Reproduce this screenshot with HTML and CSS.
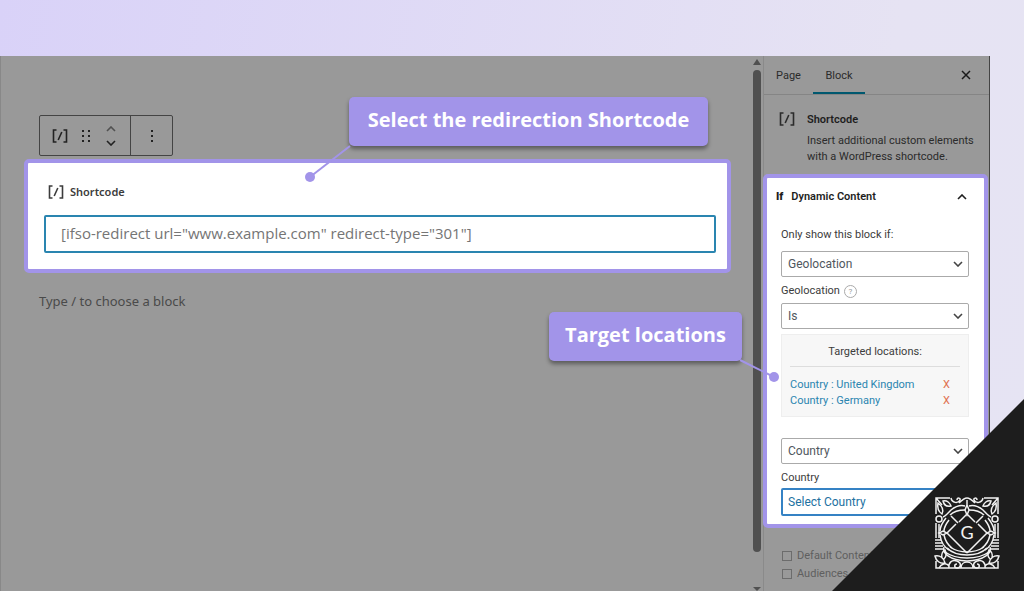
FILE: index.html
```html
<!DOCTYPE html>
<html lang="en">
<head>
    <meta charset="UTF-8">
    <meta name="viewport" content="width=device-width, initial-scale=1.0">
    <title>Redirection Shortcode</title>
    <link rel="stylesheet" href="styles.css">
</head>
<body>
    <!-- Shared icons -->
    <svg width="0" height="0" class="sprite" aria-hidden="true">
        <symbol id="icon-shortcode" viewBox="0 0 16 14">
            <path d="M4.500 1H1.500V13H4.500M11.500 1H14.500V13H11.500M9.800 3L6.200 11" fill="none" stroke="currentColor" stroke-width="1.600"/>
        </symbol>
        <symbol id="icon-chevron" viewBox="0 0 10 6">
            <path d="M1 1L5 5L9 1" fill="none" stroke="currentColor" stroke-width="1.600"/>
        </symbol>
    </svg>

    <div class="workspace">
        <main class="editor">
            <div class="toolbar">
                <div class="toolbar-group">
                    <button type="button" aria-label="Shortcode"><svg class="icon-code"><use href="#icon-shortcode"/></svg></button>
                    <button type="button" aria-label="Drag">
                        <svg width="10" height="14" viewBox="0 0 10 14" fill="currentColor">
                            <rect x="1" y="1" width="2" height="2"/><rect x="7" y="1" width="2" height="2"/>
                            <rect x="1" y="6" width="2" height="2"/><rect x="7" y="6" width="2" height="2"/>
                            <rect x="1" y="11" width="2" height="2"/><rect x="7" y="11" width="2" height="2"/>
                        </svg>
                    </button>
                    <div class="movers">
                        <button type="button" class="mover-up" aria-label="Move up"><svg class="icon-chevron"><use href="#icon-chevron"/></svg></button>
                        <button type="button" aria-label="Move down"><svg class="icon-chevron"><use href="#icon-chevron"/></svg></button>
                    </div>
                </div>
                <div class="toolbar-group toolbar-more">
                    <button type="button" aria-label="Options">
                        <svg width="4" height="14" viewBox="0 0 4 14" fill="currentColor">
                            <rect x="1" y="1" width="2" height="2"/><rect x="1" y="6" width="2" height="2"/><rect x="1" y="11" width="2" height="2"/>
                        </svg>
                    </button>
                </div>
            </div>

            <section class="shortcode-card">
                <label for="shortcode" class="shortcode-label">
                    <svg class="icon-code"><use href="#icon-shortcode"/></svg>
                    Shortcode
                </label>
                <input id="shortcode" class="shortcode-input" type="text" value='[ifso-redirect url="www.example.com" redirect-type="301"]'>

                <div class="callout callout-shortcode">
                    Select the redirection Shortcode
                    <svg class="pin" width="48" height="42" viewBox="0 0 48 42">
                        <path d="M6 35L46 4" stroke="#a294e9" stroke-width="2"/>
                        <circle cx="6" cy="35" r="5" fill="#a294e9"/>
                    </svg>
                </div>
            </section>

            <p class="prompt">Type / to choose a block</p>
        </main>

        <div class="scrollbar">
            <span class="arrow-up"></span>
            <span class="thumb"></span>
            <span class="arrow-down"></span>
        </div>

        <aside class="sidebar">
            <nav class="tabs">
                <button type="button" class="tab">Page</button>
                <button type="button" class="tab active">Block</button>
                <button type="button" class="close" aria-label="Close">
                    <svg width="10" height="10" viewBox="0 0 10 10"><path d="M1 1L9 9M9 1L1 9" stroke="currentColor" stroke-width="1.500"/></svg>
                </button>
            </nav>

            <div class="block-info">
                <svg class="icon-code"><use href="#icon-shortcode"/></svg>
                <div>
                    <h2>Shortcode</h2>
                    <p>Insert additional custom elements with a WordPress shortcode.</p>
                </div>
            </div>

            <section class="panel">
                <button type="button" class="panel-title">
                    <span class="brand">If</span>
                    Dynamic Content
                    <svg class="icon-chevron up"><use href="#icon-chevron"/></svg>
                </button>

                <label for="condition">Only show this block if:</label>
                <div class="select">
                    <select id="condition"><option>Geolocation</option></select>
                    <svg class="icon-chevron"><use href="#icon-chevron"/></svg>
                </div>

                <div class="label-row">
                    <label for="operator">Geolocation</label>
                    <span class="help">?</span>
                </div>
                <div class="select">
                    <select id="operator"><option>Is</option></select>
                    <svg class="icon-chevron"><use href="#icon-chevron"/></svg>
                </div>

                <div class="targets">
                    <h3>Targeted locations:</h3>
                    <ul>
                        <li><a href="#">Country : United Kingdom</a><button type="button">X</button></li>
                        <li><a href="#">Country : Germany</a><button type="button">X</button></li>
                    </ul>
                </div>

                <div class="select">
                    <select id="type" aria-label="Location type"><option>Country</option></select>
                    <svg class="icon-chevron"><use href="#icon-chevron"/></svg>
                </div>
                <label for="country" class="country-label">Country</label>
                <div class="select select-focus">
                    <select id="country"><option>Select Country</option></select>
                </div>

                <div class="callout callout-target">
                    Target locations
                    <svg class="pin" width="42" height="24" viewBox="0 0 42 24">
                        <path d="M2 1L36 18" stroke="#a294e9" stroke-width="2"/>
                        <circle cx="36" cy="18" r="5" fill="#a294e9"/>
                    </svg>
                </div>
            </section>

            <div class="extras">
                <label><input type="checkbox"> Default Content</label>
                <label><input type="checkbox"> Audiences</label>
            </div>
        </aside>
    </div>

    <!-- Corner badge -->
    <div class="corner">
        <svg class="logo" viewBox="0 0 66 72" fill="none" stroke="#f2f2f2" stroke-width="1.500">
            <defs>
                <g id="ornament">
                    <!-- frame and corner leaves -->
                    <path d="M2 17V1H16M2 1L8 8M2 26V41M5 27V41M1 43H7M1 46H8M1 49H9M1 52H10"/>
                    <path d="M4 6C3 11 5 15 8 17C10 13 8 9 4 6ZM9 4C13 3 16 6 17 9C13 10 10 8 9 4Z"/>
                    <circle cx="5" cy="22" r="3"/>
                    <path d="M17 1C18 6 24 7 26 3C27 1 23 0 23 3M25 6C28 3 30 1 33 1"/>
                    <path d="M9 20C12 19 14 16 17 13C22 9 27 8 31 9"/>
                    <!-- ring bands -->
                    <path d="M31 13C24 13 19 15 16 18M12 21C8 26 6 30 6 34M15 23C12 27 10 31 10 34M6 38C7 45 10 50 15 53M10 38C11 43 14 48 18 51"/>
                    <path d="M11 55C18 60 25 61 33 61M13 51C19 57 26 58 33 58M16 50C22 54 27 55 33 55M10 50C8 56 15 63 33 64"/>
                    <!-- diamond -->
                    <path d="M33 17L25 25M22 27L13 36L33 56M17 19L24 26"/>
                    <path d="M5 36L9 34L13 36L9 38Z"/>
                    <!-- lower scrolls -->
                    <path d="M1 59C6 58 10 61 11 66C6 67 2 64 1 59ZM8 61C7 57 9 54 11 53C13 57 12 60 10 62M2 64V71H33"/>
                    <path d="M5 71C7 67 12 65 15 69M15 71C14 66 18 62 23 64C28 66 27 71 23 71C20 71 20 67 23 67M27 71C27 67 30 65 33 65"/>
                </g>
            </defs>
            <use href="#ornament"/>
            <use href="#ornament" transform="matrix(-1 0 0 1 66 0)"/>
            <path d="M33 8L35 13L33 18L31 13ZM33 3V8"/>
            <text x="33" y="42" text-anchor="middle" fill="#f2f2f2" stroke="none">G</text>
        </svg>
    </div>
</body>
</html>
```
FILE: styles.css
```css
:root {
    --accent: #a294e9;
    --dim: #999;
    --text: #3c3c3c;
    --blue: #2a85b0;
}

* {
    margin: 0;
    padding: 0;
    box-sizing: border-box;
}

body {
    min-height: 100vh;
    padding: 56px 34px 0 0;
    background: linear-gradient(100deg, #d9d2f8, #e6e3f3 80%, #e6e4f3);
    color: var(--text);
    font-family: "Noto Sans", "Open Sans", sans-serif;
    font-size: 11px;
    line-height: 16px;
}

button {
    border: 0;
    background: none;
    color: inherit;
    font: inherit;
    cursor: pointer;
}

svg {
    display: block;
    flex: none;
}

.sprite {
    position: absolute;
}

.icon-code {
    width: 16px;
    height: 14px;
}

.icon-chevron {
    width: 10px;
    height: 6px;
}

.workspace {
    display: flex;
    min-height: calc(100vh - 56px);
    background: var(--dim);
}

/* Editor */
.editor {
    flex: 1;
    padding: 59px 21px 0 24px;
    border-left: 1px solid #888;
    margin-right: -1px;
}

.toolbar {
    display: flex;
    width: 134px;
    height: 41px;
    margin-left: 14px;
    border: 1px solid #444;
    border-radius: 2px;
    color: #222;
}

.toolbar-group {
    display: flex;
    flex: 1;
    align-items: center;
    gap: 13px;
    padding-left: 12px;
}

.toolbar-more {
    flex: none;
    width: 42px;
    justify-content: center;
    padding: 0;
    border-left: 1px solid #444;
}

.movers {
    display: flex;
    flex-direction: column;
    gap: 8px;
    margin-left: 2px;
}

.mover-up {
    opacity: 0.6;
}

.mover-up svg,
.up {
    transform: rotate(180deg);
}

.shortcode-card {
    position: relative;
    margin: 3px 0 20px -1px;
    padding: 21px 11px 16px 16px;
    border: 4px solid var(--accent);
    border-radius: 5px;
    background: white;
}

.shortcode-label {
    display: flex;
    align-items: center;
    gap: 6px;
    margin: 0 0 15px 4px;
    font-weight: 600;
}

.shortcode-input {
    display: block;
    width: 100%;
    height: 38px;
    padding: 0 15px 2px;
    border: 2px solid var(--blue);
    border-radius: 2px;
    color: #757575;
    font: 15px "Open Sans", sans-serif;
    outline: none;
}

.prompt {
    margin-left: 14px;
    color: #4a4a4a;
    font-size: 13px;
}

/* Callouts */
.callout {
    position: absolute;
    z-index: 2;
    height: 49px;
    border-radius: 5px;
    background: var(--accent);
    box-shadow: 0 3px 4px rgba(0, 0, 0, 0.4);
    color: white;
    font: bold 20px/46px "Open Sans", sans-serif;
    text-align: center;
    white-space: nowrap;
}

.callout-shortcode {
    top: -66px;
    right: 19px;
    width: 359px;
}

.callout-target {
    top: 134px;
    right: 242px;
    width: 193px;
}

.pin {
    position: absolute;
}

.callout-shortcode .pin {
    top: 45px;
    right: 356px;
}

.callout-target .pin {
    top: 47px;
    left: 189px;
}

/* Scrollbar */
.scrollbar {
    display: flex;
    flex-direction: column;
    align-items: center;
    gap: 5px;
    width: 12px;
    padding: 3px 0 0;
}

.thumb {
    width: 8px;
    height: 482px;
    border-radius: 4px;
    background: #505050;
}

.arrow-up,
.arrow-down {
    border: 4px solid transparent;
    border-top-width: 0;
    border-bottom: 6px solid #505050;
}

.arrow-down {
    margin-top: auto;
    border-top: 4px solid #505050;
    border-bottom: 0;
}

/* Sidebar */
.sidebar {
    width: 227px;
    border-left: 1px solid #8a8a8a;
    border-right: 1px solid #444;
    font-family: Roboto, "Open Sans", sans-serif;
}

.tabs {
    display: flex;
    height: 39px;
    border-bottom: 1px solid #858585;
}

.tab {
    width: 49px;
    padding-top: 2px;
    color: #2b2b2b;
}

.tab.active {
    width: 52px;
    border-bottom: 2px solid #00586f;
    padding-top: 4px;
}

.close {
    margin-left: auto;
    padding: 0 18px;
    color: #1b1b1b;
}

.block-info {
    display: flex;
    gap: 12px;
    padding: 17px 12px 9px 15px;
    color: #2b2b2b;
}

.block-info h2 {
    margin-bottom: 5px;
    color: #1e1e1e;
    font-size: 11px;
    font-weight: 600;
}

.panel {
    position: relative;
    margin: 0 1px 0 -1px;
    padding: 0 15px 8px 14px;
    border: 4px solid var(--accent);
    border-radius: 5px;
    background: white;
}

.panel-title {
    display: flex;
    align-items: center;
    gap: 8px;
    width: 100%;
    height: 38px;
    margin-bottom: 11px;
    margin-left: -5px;
    color: #1e1e1e;
    font-weight: 600;
}

.panel-title svg {
    margin-left: auto;
    margin-right: -3px;
}

.brand {
    font-weight: 900;
}

.panel > label {
    display: block;
    margin-bottom: 8px;
}

.select {
    position: relative;
}

.select select {
    display: block;
    width: 100%;
    height: 26px;
    padding: 0 6px;
    appearance: none;
    border: 1px solid #aaa;
    border-radius: 2px;
    background: white;
    color: #50575e;
    font: 12px Roboto, "Open Sans", sans-serif;
}

.select svg {
    position: absolute;
    top: 10px;
    right: 6px;
    color: #444;
    pointer-events: none;
}

.select-focus select {
    height: 28px;
    border: 2px solid #3582c4;
    padding: 0 5px;
    color: #2271a1;
}

.label-row {
    display: flex;
    align-items: center;
    gap: 4px;
    margin: 6px 0 4px;
}

.help {
    width: 13px;
    height: 13px;
    border: 1px solid #aaa;
    border-radius: 50%;
    color: #999;
    font-size: 8px;
    line-height: 11px;
    text-align: center;
}

.targets {
    height: 83px;
    margin: 5px 0 21px;
    padding: 9px 8px 0;
    border: 1px solid #eee;
    background: #f7f7f7;
}

.targets h3 {
    margin-bottom: 10px;
    padding-bottom: 6px;
    border-bottom: 1px solid #ddd;
    font-size: 11px;
    font-weight: 400;
    text-align: center;
}

.targets ul {
    list-style: none;
}

.targets li {
    display: flex;
    justify-content: space-between;
    padding-right: 10px;
}

.targets a {
    color: var(--blue);
    text-decoration: none;
}

.targets button {
    color: #e0704f;
}

.panel > .country-label {
    margin: 6px 0 2px;
}

.extras {
    display: flex;
    flex-direction: column;
    gap: 2px;
    padding: 20px 18px 8px;
    color: #5f5f5f;
}

.extras label {
    display: flex;
    align-items: center;
    gap: 5px;
}

.extras input {
    width: 10px;
    height: 10px;
    appearance: none;
    border: 1px solid #6c6c6c;
}

/* Corner badge */
.corner {
    position: fixed;
    right: 0;
    bottom: 0;
    z-index: 3;
    width: 192px;
    height: 192px;
    background: #1d1d1d;
    clip-path: polygon(100% 0, 100% 100%, 0 100%);
}

.logo {
    position: absolute;
    right: 24px;
    bottom: 22px;
    width: 66px;
    height: 72px;
}

.logo text {
    font: 18px Lato, sans-serif;
}
```
